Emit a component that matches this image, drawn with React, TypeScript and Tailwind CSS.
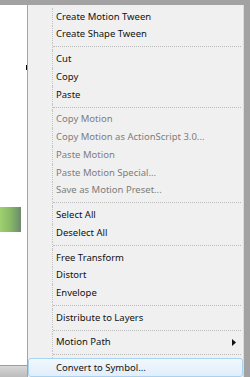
type Entry =
  | { kind: "item"; label: string; disabled?: boolean; submenu?: boolean; active?: boolean }
  | { kind: "sep" };

const entries: Entry[] = [
  { kind: "item", label: "Create Motion Tween" },
  { kind: "item", label: "Create Shape Tween" },
  { kind: "sep" },
  { kind: "item", label: "Cut" },
  { kind: "item", label: "Copy" },
  { kind: "item", label: "Paste" },
  { kind: "sep" },
  { kind: "item", label: "Copy Motion", disabled: true },
  { kind: "item", label: "Copy Motion as ActionScript 3.0...", disabled: true },
  { kind: "item", label: "Paste Motion", disabled: true },
  { kind: "item", label: "Paste Motion Special...", disabled: true },
  { kind: "item", label: "Save as Motion Preset...", disabled: true },
  { kind: "sep" },
  { kind: "item", label: "Select All" },
  { kind: "item", label: "Deselect All" },
  { kind: "sep" },
  { kind: "item", label: "Free Transform" },
  { kind: "item", label: "Distort" },
  { kind: "item", label: "Envelope" },
  { kind: "sep" },
  { kind: "item", label: "Distribute to Layers" },
  { kind: "sep" },
  { kind: "item", label: "Motion Path", submenu: true },
  { kind: "sep" },
  { kind: "item", label: "Convert to Symbol...", active: true },
];

function MenuRow({ entry }: { entry: Entry }) {
  if (entry.kind === "sep") {
    return (
      <div className="flex h-[6.85px]">
        <div className="w-[25px] shrink-0 border-r border-dotted border-[#c4c4c4]" />
        <div className="flex flex-1 items-center pr-[2px]">
          <div className="w-full border-t border-dotted border-[#bcbcbc]" />
        </div>
      </div>
    );
  }

  if (entry.active) {
    return (
      <div className="flex h-[19px] items-center rounded-[3px] border border-[#a8d2f2] bg-gradient-to-b from-[#f1f7fd] to-[#e1eefb] pl-[27px] text-[#111]">
        {entry.label}
      </div>
    );
  }

  return (
    <div className="flex h-[17.8px]">
      <div className="w-[25px] shrink-0 border-r border-dotted border-[#c4c4c4]" />
      <div
        className={`flex flex-1 items-center justify-between pl-[3px] pr-[7px] ${
          entry.disabled ? "text-[#7d7d7d]" : "text-[#111]"
        }`}
      >
        <span>{entry.label}</span>
        {entry.submenu && (
          <svg width="4" height="7" viewBox="0 0 4 7">
            <path d="M0 0 L4 3.5 L0 7 Z" fill="#111" />
          </svg>
        )}
      </div>
    </div>
  );
}

export default function App() {
  return (
    <div className="flex h-[377px] w-[250px] flex-col overflow-hidden bg-white font-['Noto_Sans',sans-serif] text-[9.5px]">
      <div className="h-[5px] shrink-0 bg-[#a2a2a2]" />
      <div className="flex flex-1">
        <div className="flex w-[27px] shrink-0 flex-col">
          <div className="mt-[60px] h-[5px] w-px self-end bg-black" />
          <div className="mt-[137px] h-[25px] w-[21px] bg-gradient-to-r from-[#9fd170] via-[#88b866] to-[#6c8a6c]" />
          <div className="mt-auto h-[12px] w-[28px] border-t border-[#9c9c9c] bg-gradient-to-b from-[#d8d8d8] to-[#bcbcbc]" />
        </div>
        <div className="flex w-[217px] shrink-0 flex-col border-l border-r border-l-[#a4a4a4] border-r-[#dcdcdc] bg-[#f0f0f0] pt-[2.8px]">
          {entries.map((entry, i) => (
            <MenuRow key={i} entry={entry} />
          ))}
        </div>
        <div className="w-[6px] shrink-0 bg-[#a2a2a2]" />
      </div>
    </div>
  );
}
